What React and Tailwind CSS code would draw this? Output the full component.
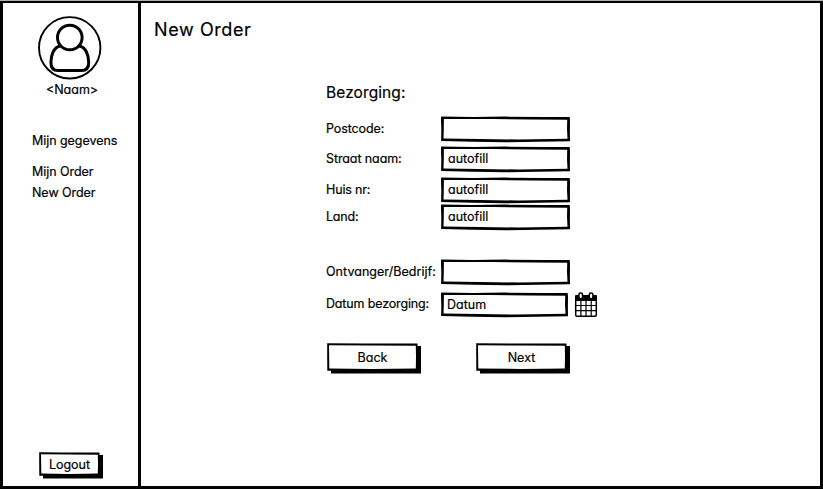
function FieldOutline({ w, h }) {
  return (
    <svg className="absolute left-0 top-0 overflow-visible" width={w} height={h}>
      <path
        fillRule="evenodd"
        d={`M0.1 0.4L${w * 0.25} 0.9L${w * 0.5} 0.6L${w * 0.8} 1L${w - 0.3} 0.9L${w} 5L${w - 0.1} ${h * 0.6}L${w} ${h - 0.7}L${w * 0.75} ${h - 0.2}L${w * 0.5} ${h + 0.2}L${w * 0.25} ${h - 0.2}L0.1 ${h - 1}L0.3 ${h * 0.55}L0 4Z
        M2.9 3.1L2.8 ${h * 0.5}L2.5 ${h - 3.6}L${w * 0.3} ${h - 3}L${w * 0.6} ${h - 2.5}L${w - 2.5} ${h - 3.2}L${w - 3} ${h * 0.5}L${w - 2.8} 3.8L${w * 0.7} 3.4L${w * 0.4} 3Z`}
      />
    </svg>
  );
}

function ButtonOutline({ w, h }) {
  return (
    <svg className="absolute left-0 top-0 overflow-visible" width={w} height={h}>
      <path d={`M4 ${h - 1}H${w - 1}V3H${w + 3}V${h + 2.6}H4Z`} />
      <path
        fillRule="evenodd"
        d={`M0.2 0.3L${w * 0.4} 0.6L${w - 0.5} 0.5L${w} ${h}L${w * 0.5} ${h - 0.2}L0.3 ${h - 0.3}L0.2 ${h * 0.5}Z
        M2 2.3L2.3 ${h - 2.4}L${w * 0.5} ${h - 2.1}L${w - 2.2} ${h - 2.5}L${w - 2} ${h * 0.5}L${w - 2.2} 2.8L${w * 0.5} 2.6Z`}
      />
    </svg>
  );
}

function Field({ label, value, row, w = 129, h = 26, pad = 'pl-[7px]', spacing = '' }) {
  return (
    <div className={`flex items-center ${row}`}>
      <label className={`w-[115px] shrink-0 whitespace-nowrap ${spacing}`}>{label}</label>
      <div className={`relative flex items-center ${pad}`} style={{ width: w, height: h }}>
        <FieldOutline w={w} h={h} />
        <span className="relative">{value}</span>
      </div>
      {value === 'Datum' && <Calendar />}
    </div>
  );
}

function Button({ children, w, h, className = '' }) {
  return (
    <button className={`relative flex items-center justify-center ${className}`} style={{ width: w, height: h }}>
      <ButtonOutline w={w} h={h} />
      <span className="relative">{children}</span>
    </button>
  );
}

function Calendar() {
  return (
    <svg className="ml-[6px] shrink-0" width="24" height="25" viewBox="0 0 24 25" fill="none" stroke="#000">
      <path d="M1 4Q1 3 2 3H22Q23 3 23 4V9H1Z" fill="#000" stroke="none" />
      <path d="M1.7 8V23Q1.7 24.2 2.9 24.2H21.1Q22.3 24.2 22.3 23V8" strokeWidth="1.5" />
      <path d="M6.9 9V24M12 9V24M17.2 9V24M2 13.5H22M2 18.6H22" strokeWidth="1.2" />
      <rect x="4.9" y="0.9" width="3.6" height="5.8" rx="1.6" fill="#fff" strokeWidth="1.5" />
      <rect x="15.3" y="0.9" width="3.6" height="5.8" rx="1.6" fill="#fff" strokeWidth="1.5" />
    </svg>
  );
}

function Avatar() {
  return (
    <svg className="ml-[35px]" width="64" height="64" viewBox="0 0 64 64" fill="none" stroke="#000">
      <circle cx="31.7" cy="31.8" r="30.7" strokeWidth="1.9" />
      <path d="M22.5 30C15.5 31 12.9 39.5 12.9 46.5Q12.9 54.6 20 54.6H43.6Q50.7 54.6 50.7 46.5C50.7 39.5 48 31 41 30" strokeWidth="3" />
      <circle cx="31.8" cy="21.5" r="12.3" fill="#fff" strokeWidth="3" />
    </svg>
  );
}

export default function App() {
  return (
    <div className="h-[489px] w-[823px] border-t border-[#b0b0b0]">
      <div className="flex h-[488px] w-[823px] overflow-hidden border-t-2 border-r-[3px] border-b-[3px] border-l-[3px] border-black bg-white font-['Inter','Liberation_Sans',sans-serif] text-[12.5px] leading-4 text-black [-webkit-text-stroke:0.2px_black] [font-feature-settings:'cv11']">
        <aside className="flex w-[138px] shrink-0 flex-col border-r-[3px] border-black pt-[13px]">
          <Avatar />
          <div className="mt-[2px] pl-[3px] text-center">&lt;Naam&gt;</div>
          <nav className="mt-[35px] flex flex-col pl-[29px]">
            <span className="tracking-[-0.05px]">Mijn gegevens</span>
            <span className="mt-[15px] tracking-[-0.05px]">Mijn Order</span>
            <span className="mt-[5px] tracking-[-0.05px]">New Order</span>
          </nav>
          <Button w={61} h={24} className="mt-auto mb-[10px] ml-[36px] pt-px">Logout</Button>
        </aside>
        <main className="flex-1 pt-[15px]">
          <h1 className="pl-[13px] text-[18px] leading-6 tracking-[0.6px]">New Order</h1>
          <section className="mt-[41px] pl-[185px]">
            <h2 className="text-[15.5px] leading-5 tracking-[0.1px]">Bezorging:</h2>
            <Field label="Postcode:" row="mt-[13px]" spacing="tracking-[-0.1px]" />
            <Field label="Straat naam:" value="autofill" row="mt-[4px]" spacing="tracking-[-0.1px]" />
            <Field label="Huis nr:" value="autofill" row="mt-[5px]" spacing="tracking-[-0.15px]" />
            <Field label="Land:" value="autofill" row="mt-[1px]" spacing="tracking-[-0.2px]" />
            <Field label="Ontvanger/Bedrijf:" row="mt-[29px]" spacing="tracking-[0.04px]" />
            <Field label="Datum bezorging:" value="Datum" row="mt-[7px]" w={127} h={25} pad="pl-[6px]" spacing="pb-[2px] tracking-[-0.15px]" />
            <div className="mt-[26px] flex gap-[58px] pl-px">
              <Button w={91} h={28} className="pt-[2px]">Back</Button>
              <Button w={91} h={28} className="pt-[2px]">Next</Button>
            </div>
          </section>
        </main>
      </div>
    </div>
  );
}
